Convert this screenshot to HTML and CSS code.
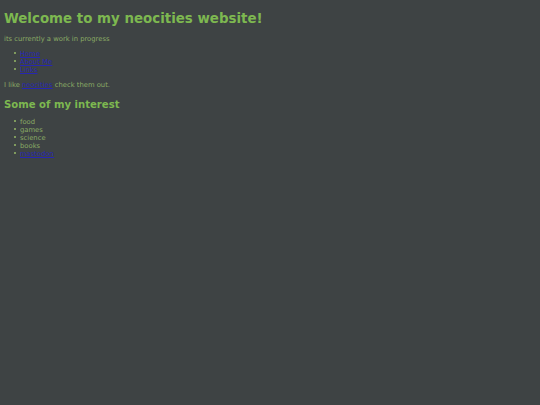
FILE: index.html
```html
<!DOCTYPE html>
<html>
<head>
<meta charset="utf-8">
<title>My neocities website</title>
<link rel="stylesheet" href="styles.css">
</head>
<body>
<h1 class="title">Welcome to my neocities website!</h1>
<p class="text">its currently a work in progress</p>
<ul class="list">
  <li><a href="#">Home</a></li>
  <li><a href="#">About Me</a></li>
  <li><a href="#">Links</a></li>
</ul>
<p class="text">I like <a href="#">neocities</a> check them out.</p>
<h2 class="subtitle">Some of my interest</h2>
<ul class="list">
  <li>food</li>
  <li>games</li>
  <li>science</li>
  <li>books</li>
  <li><a href="#">mastodon</a></li>
</ul>
</body>
</html>
```
FILE: styles.css
```css
html, body {
  background: #3e4344;
}
body {
  margin: 0;
  padding: 5px 4px;
  font-family: "DejaVu Sans", Verdana, sans-serif;
  color: #8aab64;
  font-size: 6.8px;
  line-height: 8px;
}
.title {
  font-size: 13.4px;
  line-height: 16px;
  color: #7db850;
  margin: 6px 0 8px;
}
.subtitle {
  font-size: 10.1px;
  line-height: 12px;
  color: #7db850;
  margin: 10px 0 7px;
}
.text {
  margin: 0 0 7px;
}
.list {
  margin: 0 0 7px;
  padding-left: 16px;
  list-style: none;
}
.list li::before {
  content: "";
  display: inline-block;
  width: 2px;
  height: 2px;
  background: #7f9a5e;
  margin: 0 4px 2px -6px;
  vertical-align: middle;
}
a {
  color: #2626b4;
}
```
